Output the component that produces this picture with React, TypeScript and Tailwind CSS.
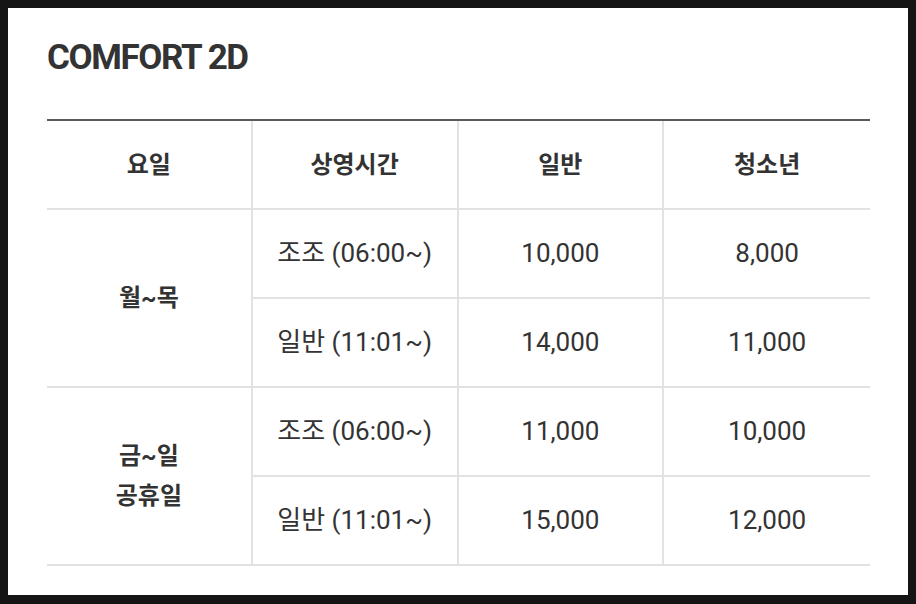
const font = { fontFamily: 'Roboto, "Noto Sans CJK KR", sans-serif' };

const rows = [
  { day: ['월~목'], slots: [['조조 (06:00~)', '10,000', '8,000'], ['일반 (11:01~)', '14,000', '11,000']] },
  { day: ['금~일', '공휴일'], slots: [['조조 (06:00~)', '11,000', '10,000'], ['일반 (11:01~)', '15,000', '12,000']] },
];

const cell = 'flex h-[89px] items-center justify-center border-b-2 border-[#e2e2e2] text-[26px] text-[#333]';

export default function App() {
  return (
    <div className="flex h-[604px] w-[916px] bg-[#151515] pb-[9px] pl-2 pr-2 pt-2" style={font}>
      <div className="flex-1 bg-white pl-[39px] pt-[32px]">
        <h1 className="text-[35px] font-bold leading-none tracking-[-1.4px] text-[#333]">COMFORT 2D</h1>
        <div className="mt-[44px] grid w-[823px] grid-cols-4 border-t-2 border-[#5a5a5a]">
          {['요일', '상영시간', '일반', '청소년'].map((h, i) => (
            <div
              key={h}
              className={`flex h-[89px] items-center justify-center border-b-2 border-[#e2e2e2] text-[24px] font-bold text-[#333] ${i < 3 ? 'border-r-2' : ''}`}
            >
              {h}
            </div>
          ))}
          {rows.map((r) => (
            <div key={r.day[0]} className="col-span-4 grid grid-cols-4">
              <div className="row-span-2 flex flex-col items-center justify-center border-b-2 border-r-2 border-[#e2e2e2] text-[24px] font-bold leading-[40px] text-[#333]">
                {r.day.map((d) => (
                  <span key={d}>{d}</span>
                ))}
              </div>
              {r.slots.map((s) => (
                <div key={s[0]} className="contents">
                  <div className={`${cell} border-r-2`}>{s[0]}</div>
                  <div className={`${cell} border-r-2`}>{s[1]}</div>
                  <div className={cell}>{s[2]}</div>
                </div>
              ))}
            </div>
          ))}
        </div>
      </div>
    </div>
  );
}
